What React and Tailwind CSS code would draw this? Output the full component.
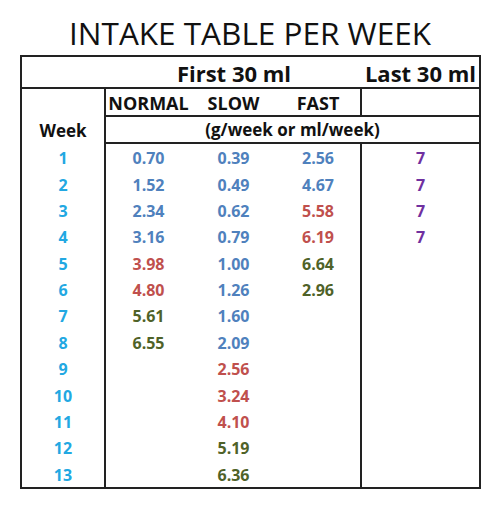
import React from "react";

const C = {
  b: "text-[#4f81bd]",
  r: "text-[#c0504d]",
  g: "text-[#4f6228]",
};

const rows = [
  ["1", ["0.70", "b"], ["0.39", "b"], ["2.56", "b"], "7"],
  ["2", ["1.52", "b"], ["0.49", "b"], ["4.67", "b"], "7"],
  ["3", ["2.34", "b"], ["0.62", "b"], ["5.58", "r"], "7"],
  ["4", ["3.16", "b"], ["0.79", "b"], ["6.19", "r"], "7"],
  ["5", ["3.98", "r"], ["1.00", "b"], ["6.64", "g"], ""],
  ["6", ["4.80", "r"], ["1.26", "b"], ["2.96", "g"], ""],
  ["7", ["5.61", "g"], ["1.60", "b"], null, ""],
  ["8", ["6.55", "g"], ["2.09", "b"], null, ""],
  ["9", null, ["2.56", "r"], null, ""],
  ["10", null, ["3.24", "r"], null, ""],
  ["11", null, ["4.10", "r"], null, ""],
  ["12", null, ["5.19", "g"], null, ""],
  ["13", null, ["6.36", "g"], null, ""],
];

function Num({ v, w }) {
  return (
    <div className={`${w} flex items-center justify-center pt-[2px]`}>
      {v ? <span className={C[v[1]]}>{v[0]}</span> : null}
    </div>
  );
}

export default function App() {
  return (
    <div className="w-[500px] h-[509px] bg-white font-['Open_Sans',sans-serif] text-[#111]">
      <div className="pt-[15px] h-[51px] text-center text-[31.5px] leading-[36px]">
        INTAKE TABLE PER WEEK
      </div>
      <div className="ml-[20px] mt-[4px] w-[461px] border-2 border-[#222] font-bold">
        <div className="flex h-[32px] border-b-2 border-[#222] text-[22px] leading-[30px] pt-[1px]">
          <div className="w-[84px]" />
          <div className="w-[256px] text-center">First 30 ml</div>
          <div className="flex-1 text-center">Last 30 ml</div>
        </div>
        <div className="flex">
          <div className="w-[84px] h-[55px] border-r-2 border-[#222] flex items-end justify-center pb-[2px] text-[17px] leading-[22px]">
            Week
          </div>
          <div className="flex-1">
            <div className="flex h-[28px] border-b-2 border-[#222] text-[18px] leading-[26px]">
              <div className="w-[256px] border-r-2 border-[#222] flex pt-[1px]">
                <div className="w-[85px] text-center">NORMAL</div>
                <div className="w-[85px] text-center">SLOW</div>
                <div className="w-[84px] text-center">FAST</div>
              </div>
              <div className="flex-1" />
            </div>
            <div className="h-[27px] border-b-2 border-[#222] text-center text-[17px] leading-[25px]">
              (g/week or ml/week)
            </div>
          </div>
        </div>
        <div className="flex flex-col text-[16px]">
          {rows.map((r) => (
            <div key={r[0]} className="flex h-[26.38px]">
              <div className="w-[84px] border-r-2 border-[#222] flex items-center justify-center pt-[2px] text-[#22a8e2]">
                {r[0]}
              </div>
              <div className="w-[256px] border-r-2 border-[#222] flex">
                <Num v={r[1]} w="w-[85px]" />
                <Num v={r[2]} w="w-[85px]" />
                <Num v={r[3]} w="w-[84px]" />
              </div>
              <div className="flex-1 flex items-center justify-center pt-[2px] text-[#7030a0]">
                {r[4]}
              </div>
            </div>
          ))}
        </div>
      </div>
    </div>
  );
}
